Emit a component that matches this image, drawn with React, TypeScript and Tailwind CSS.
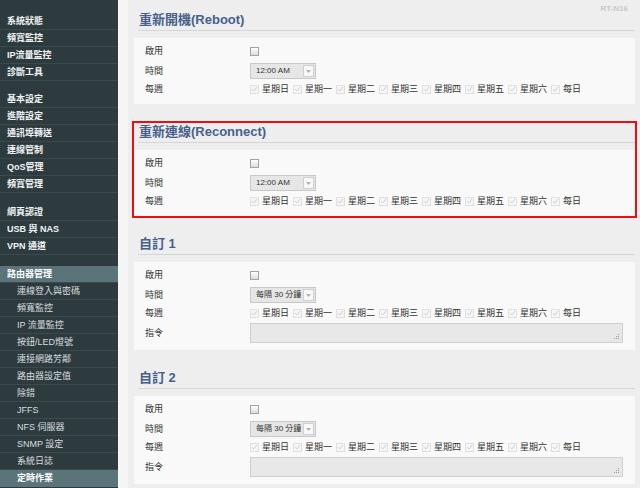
import React from "react";

const FONT = '"Liberation Sans", "Noto Sans CJK TC", sans-serif';

const MENU_GROUPS = [
  ["系統狀態", "頻寬監控", "IP流量監控", "診斷工具"],
  ["基本設定", "進階設定", "通訊埠轉送", "連線管制", "QoS管理", "頻寬管理"],
  ["網頁認證", "USB 與 NAS", "VPN 通道"],
];

const ADMIN_ITEMS = [
  "連線登入與密碼",
  "頻寬監控",
  "IP 流量監控",
  "按鈕/LED燈號",
  "連接網路芳鄰",
  "路由器設定值",
  "除錯",
  "JFFS",
  "NFS 伺服器",
  "SNMP 設定",
  "系統日誌",
];

const DAYS = ["星期日", "星期一", "星期二", "星期三", "星期四", "星期五", "星期六", "每日"];

const SideBar = () => (
  <aside className="w-[118px] shrink-0 bg-[#2d3b3f] pt-[13px]">
    {MENU_GROUPS.map((group, gi) => (
      <div key={gi} className={gi === 0 ? "" : gi === 1 ? "mt-[10px]" : "mt-[11px]"}>
        {group.map((item) => (
          <div
            key={item}
            className="h-[17px] border-b border-[#3b4a4f] pl-[7px] text-[9px] font-bold leading-[16px] text-[#f2f4f4]"
          >
            {item}
          </div>
        ))}
      </div>
    ))}
    <div className="mt-[11px]">
      <div className="h-[17px] border-b border-[#3b4a4f] bg-[#5a7479] pl-[7px] text-[9px] font-bold leading-[16px] text-white">
        路由器管理
      </div>
      {ADMIN_ITEMS.map((item) => (
        <div
          key={item}
          className="h-[17px] border-b border-[#3b4a4f] pl-[17px] text-[9px] leading-[16px] text-[#d9dedf]"
        >
          {item}
        </div>
      ))}
      <div className="h-[17px] bg-[#5a7479] pl-[17px] text-[9px] font-bold leading-[16px] text-white">
        定時作業
      </div>
    </div>
  </aside>
);

const CheckBox = () => (
  <span className="block h-[9px] w-[9px] border border-[#a3a3a3] bg-gradient-to-b from-white to-[#dcdcdc]" />
);

const DayCheck = () => (
  <span className="flex h-[9px] w-[9px] items-center justify-center border border-[#e0e0e0] bg-[#f6f6f6]">
    <svg width="7" height="6" viewBox="0 0 7 6">
      <path d="M1 3.2 2.8 5 6 1" fill="none" stroke="#cfcfcf" strokeWidth="1" />
    </svg>
  </span>
);

const Select = ({ value }: { value: string }) => (
  <div className="flex h-[16px] w-[66px] items-center justify-between border border-[#c8c8c8] bg-[#e6e6e6] pl-[5px] pr-[1px]">
    <span className="whitespace-nowrap text-[8px] leading-none text-[#333]">{value}</span>
    <span className="flex h-[12px] w-[11px] shrink-0 items-center justify-center border border-[#d0d0d0] bg-[#f8f8f8]">
      <svg width="5" height="3" viewBox="0 0 5 3">
        <path d="M0 0h5L2.5 3z" fill="#b0b0b0" />
      </svg>
    </span>
  </div>
);

const Row = ({ label, children, className = "" }: { label: string; children: React.ReactNode; className?: string }) => (
  <div className={`flex items-center ${className}`}>
    <div className="w-[116px] shrink-0 pl-[11px] text-[9px] leading-none text-[#333]">{label}</div>
    {children}
  </div>
);

const Section = ({
  title,
  time,
  command,
  highlight,
}: {
  title: React.ReactNode;
  time: string;
  command?: boolean;
  highlight?: boolean;
}) => (
  <section className={`border-2 ${highlight ? "border-[#f00d0d]" : "border-transparent"}`}>
    <h2 className="ml-[4px] border-b border-[#d6d6d6] pb-[1px] pl-[1px] text-[13px] font-bold leading-[18px] text-[#46608c]">
      {title}
    </h2>
    <div className="mt-[7px] bg-[#f9f9f9] pt-[5px] pb-[7px]">
      <Row label="啟用" className="h-[16px]">
        <CheckBox />
      </Row>
      <Row label="時間" className="mt-[4px] h-[16px]">
        <Select value={time} />
      </Row>
      <Row label="每週" className="mt-[2px] h-[16px]">
        <div className="flex items-center">
          {DAYS.map((d) => (
            <div key={d} className="flex w-[43px] items-center gap-[3px]">
              <DayCheck />
              <span className="text-[9px] leading-none text-[#333]">{d}</span>
            </div>
          ))}
        </div>
      </Row>
      {command && (
        <Row label="指令" className="mt-[2px] h-[20px]">
          <div className="flex h-[20px] w-[373px] items-end justify-end border border-[#cfcfcf] bg-[#e8e8e8] p-[2px]">
            <svg width="6" height="6" viewBox="0 0 6 6">
              <rect x="4" y="0" width="1" height="1" fill="#9a9a9a" />
              <rect x="2" y="2" width="1" height="1" fill="#9a9a9a" />
              <rect x="4" y="2" width="1" height="1" fill="#9a9a9a" />
              <rect x="0" y="4" width="1" height="1" fill="#9a9a9a" />
              <rect x="2" y="4" width="1" height="1" fill="#9a9a9a" />
              <rect x="4" y="4" width="1" height="1" fill="#9a9a9a" />
            </svg>
          </div>
        </Row>
      )}
    </div>
  </section>
);

export default function App() {
  return (
    <div className="flex h-[488px] w-[640px] overflow-hidden" style={{ fontFamily: FONT }}>
      <SideBar />
      <div className="w-[10px] shrink-0 bg-[#f5f5f5]" />
      <main className="relative flex flex-1 flex-col gap-[15px] bg-[#eeeeee] pt-[9px] pr-[3px] pl-[4px]">
        <span className="absolute top-[3px] right-[12px] text-[8px] font-bold text-[#c9c9c9]">RT-N16</span>
        <Section title="重新開機(Reboot)" time="12:00 AM" />
        <Section title="重新連線(Reconnect)" time="12:00 AM" highlight />
        <Section title="自訂 1" time="每隔 30 分鐘" command />
        <Section title="自訂 2" time="每隔 30 分鐘" command />
      </main>
    </div>
  );
}
